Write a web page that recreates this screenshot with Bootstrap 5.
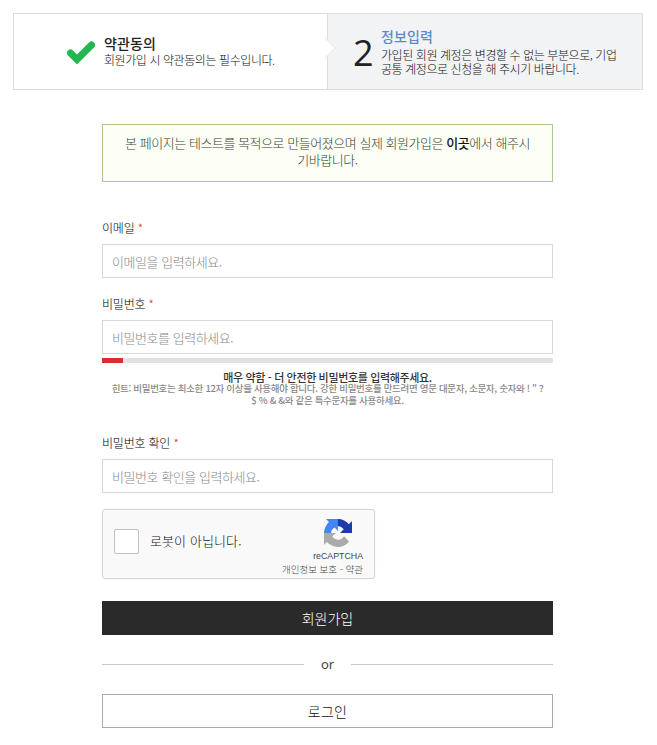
<!DOCTYPE html>
<html lang="ko">
<head>
<meta charset="utf-8">
<title>회원가입</title>
<link href="https://cdn.jsdelivr.net/npm/bootstrap@5.3.0/dist/css/bootstrap.min.css" rel="stylesheet">
<style>
body{font-family:"Noto Sans CJK KR","Noto Sans",sans-serif;color:#222;background:#fff;padding:13px 14px 0 13px;font-size:12px;letter-spacing:-.2px;overflow:hidden}
.stepper{border:1px solid #ddd;height:77px}
.step-one{width:313px;position:relative;padding-left:52px}
.step-two{flex:1;background:#f2f3f5;border-left:1px solid #ddd;padding:14px 0 0 25px}
.step-arrow{position:absolute;right:-6px;top:27px;width:14px;height:14px;background:#fff;border-top:1px solid #e6e6e6;border-right:1px solid #e6e6e6;transform:rotate(45deg)}
.step-title{font-size:14px;font-weight:500;line-height:17px;letter-spacing:.1px}
.step-sub{font-size:12px;line-height:14px;color:#111;font-weight:300;letter-spacing:-.42px}
.step-one .step-sub{margin-top:1px}
.step-one .step-text{margin-top:-1px}
.step-two .step-sub{margin-top:3px}
.step-num{font-size:36px;line-height:40px;font-family:"Open Sans",sans-serif;color:#222;width:28px;margin-top:5px}
.title-blue{color:#5a8bc8}
.signup{margin:34px 0 0 89px;width:451px}
.notice{background:#fdfff6;border:1px solid #a9c98f;border-radius:0;padding:9px 10px 0;height:58px;font-size:13px;line-height:17px;color:#334433;text-align:center;margin-bottom:38px;font-weight:300;letter-spacing:-.46px}
.notice b{color:#111;font-weight:500}
.field-label{font-size:12px;line-height:16px;margin-bottom:8px;display:block;color:#000;font-weight:300}
.req{color:#e02b2b}
.field{height:34px;border:1px solid #d8d8d8;border-radius:0;padding:0 9px;font-size:13px;letter-spacing:-.45px;font-weight:300}
.field::placeholder{color:#888}
.field-gap{margin-bottom:18px}
.meter{height:5px;background:#e2e2e2;border-radius:0;margin-top:4px}
.meter .progress-bar{background:#e02b2b}
.strength{text-align:center;margin-top:8px;margin-bottom:29px}
.strength-main{font-size:11px;line-height:12px;font-weight:500;color:#333;letter-spacing:-.36px}
.strength-hint{font-size:9.5px;line-height:11.5px;font-weight:500;color:#888;letter-spacing:-.32px;margin:0 auto;white-space:nowrap}
.captcha{width:273px;height:70px;background:#f9f9f9;border:1px solid #d6d6d6;border-radius:3px;margin-top:16px;margin-bottom:22px;box-shadow:0 0 3px rgba(0,0,0,.06);padding:0 0 6px 11px;position:relative}
.captcha-box{width:25px;height:25px;background:#fff;border:1px solid #c1c1c1;border-radius:2px;margin-right:11px}
.captcha-text{font-size:13px;color:#111;letter-spacing:.1px;font-weight:300}
.captcha-brand{position:absolute;right:11px;top:9px;text-align:right;color:#444;letter-spacing:0;font-family:"Liberation Sans","Noto Sans CJK KR",sans-serif}
.captcha-brand svg{display:block;margin:0 11px 3px auto}
.captcha-name{font-size:8.8px;line-height:12px}
.captcha-links{font-size:9.5px;line-height:14px;white-space:nowrap;font-family:"Noto Sans CJK KR",sans-serif;font-weight:300}
.btn-join{background:#2a2a2a;color:#fff;border:0;border-radius:0;height:34px;font-size:14px;padding:0;letter-spacing:0;font-weight:300}
.btn-join:hover{background:#2a2a2a;color:#fff}
.or-row{height:59px;color:#444;font-size:13px;letter-spacing:0}
.or-line{flex:1;height:1px;background:#c8c8c8}
.or-word{width:47px;text-align:center;font-family:"Noto Sans",sans-serif}
.btn-login{border:1px solid #aaa;border-radius:0;height:34px;font-size:14px;padding:0;color:#111;background:#fff;letter-spacing:.3px;font-weight:300}
</style>
</head>
<body>
<div class="stepper d-flex">
  <div class="step-one d-flex align-items-center">
    <svg width="30" height="24" viewBox="0 0 30 24" class="me-2 flex-shrink-0" aria-hidden="true"><path d="M4.5 13 L11 19.5 L25.5 5" fill="none" stroke="#22b84f" stroke-width="7" stroke-linecap="round" stroke-linejoin="miter"/></svg>
    <div class="step-text">
      <div class="step-title">약관동의</div>
      <div class="step-sub">회원가입 시 약관동의는 필수입니다.</div>
    </div>
    <span class="step-arrow"></span>
  </div>
  <div class="step-two d-flex">
    <div class="step-num">2</div>
    <div>
      <div class="step-title title-blue">정보입력</div>
      <div class="step-sub">가입된 회원 계정은 변경할 수 없는 부분으로, 기업<br>공통 계정으로 신청을 해 주시기 바랍니다.</div>
    </div>
  </div>
</div>

<form class="signup">
  <div class="notice">본 페이지는 테스트를 목적으로 만들어졌으며 실제 회원가입은 <b>이곳</b>에서 해주시<br>기바랍니다.</div>

  <label class="field-label">이메일 <span class="req">*</span></label>
  <input class="form-control field field-gap" type="email" placeholder="이메일을 입력하세요.">

  <label class="field-label">비밀번호 <span class="req">*</span></label>
  <input class="form-control field" type="password" placeholder="비밀번호를 입력하세요.">
  <div class="progress meter"><div class="progress-bar" style="width:4.7%"></div></div>
  <div class="strength">
    <div class="strength-main">매우 약함 - 더 안전한 비밀번호를 입력해주세요.</div>
    <div class="strength-hint">힌트: 비밀번호는 최소한 12자 이상을 사용해야 합니다. 강한 비밀번호를 만드려면 영문 대문자, 소문자, 숫자와 ! " ?<br>$ % &amp; &amp;와 같은 특수문자를 사용하세요.</div>
  </div>

  <label class="field-label">비밀번호 확인 <span class="req">*</span></label>
  <input class="form-control field" type="password" placeholder="비밀번호 확인을 입력하세요.">

  <div class="captcha d-flex align-items-center">
    <span class="captcha-box"></span>
    <span class="captcha-text">로봇이 아닙니다.</span>
    <div class="captcha-brand">
      <svg width="28" height="28" viewBox="0 0 64 64" aria-hidden="true">
        <path d="M64 31.955l-.033-1.37V4.687l-7.16 7.16C50.948 4.674 42.033.093 32.05.093c-10.4 0-19.622 4.96-25.458 12.64l11.736 11.86a15.55 15.55 0 0 1 4.754-5.334c2.05-1.6 4.952-2.906 8.968-2.906.485 0 .86.057 1.135.163 4.976.393 9.288 3.14 11.828 7.124l-8.307 8.307 32.294.008" fill="#1c3aa9"/>
        <path d="M31.862 0l-1.37.033H4.594l7.16 7.16C4.58 13.052 0 21.967 0 31.95c0 10.4 4.96 19.622 12.64 25.458l11.86-11.736a15.55 15.55 0 0 1-5.334-4.754c-1.6-2.05-2.906-4.952-2.906-8.968 0-.485.057-.86.163-1.135.393-4.976 3.14-9.288 7.124-11.828l8.307 8.307L31.862 0" fill="#4285f4"/>
        <path d="M.002 31.95l.033 1.37v25.898l7.16-7.16c5.86 7.173 14.775 11.754 24.76 11.754 10.4 0 19.622-4.96 25.458-12.64l-11.736-11.86a15.55 15.55 0 0 1-4.754 5.334c-2.05 1.6-4.952 2.906-8.968 2.906-.485 0-.86-.057-1.135-.163-4.976-.393-9.288-3.14-11.828-7.124l8.307-8.307-32.294-.008" fill="#ababab"/>
      </svg>
      <div class="captcha-name">reCAPTCHA</div>
      <div class="captcha-links">개인정보 보호 - 약관</div>
    </div>
  </div>

  <button type="button" class="btn btn-join w-100">회원가입</button>
  <div class="or-row d-flex align-items-center">
    <span class="or-line"></span><span class="or-word">or</span><span class="or-line"></span>
  </div>
  <button type="button" class="btn btn-login w-100">로그인</button>
</form>
<script src="https://cdn.jsdelivr.net/npm/bootstrap@5.3.0/dist/js/bootstrap.bundle.min.js"></script>
</body>
</html>
